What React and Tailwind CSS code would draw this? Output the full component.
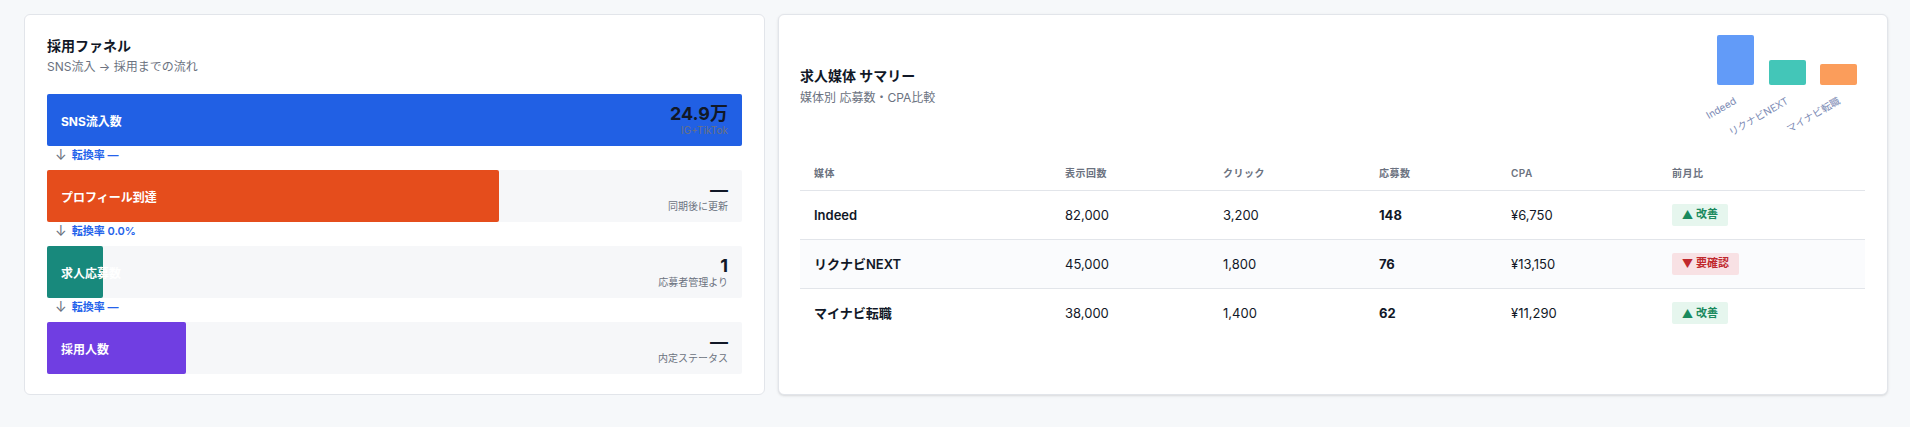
const fontStack = {
  fontFamily: '"Inter", "Noto Sans CJK JP", sans-serif',
};

const funnel = [
  { label: "SNS流入数", value: "24.9万", sub: "IG+TikTok", fill: "w-full bg-[#2160e4]", rate: "転換率 —" },
  { label: "プロフィール到達", value: "—", sub: "同期後に更新", fill: "w-[65%] bg-[#e54d1c]", rate: "転換率 0.0%" },
  { label: "求人応募数", value: "1", sub: "応募者管理より", fill: "w-[8%] bg-[#18897c]", rate: "転換率 —" },
  { label: "採用人数", value: "—", sub: "内定ステータス", fill: "w-[20%] bg-[#703ee2]" },
];

const media = [
  { name: "Indeed", views: "82,000", clicks: "3,200", apps: "148", cpa: "¥6,750", good: true },
  { name: "リクナビNEXT", views: "45,000", clicks: "1,800", apps: "76", cpa: "¥13,150", good: false },
  { name: "マイナビ転職", views: "38,000", clicks: "1,400", apps: "62", cpa: "¥11,290", good: true },
];

const FunnelChart = () => (
  <div className="flex flex-col">
    {funnel.map((step) => (
      <div key={step.label}>
        {/* Bar */}
        <div className="relative flex h-[52px] items-center justify-between rounded-[2px] bg-[#f6f7f9] px-[14px]">
          <div className={`absolute inset-y-0 left-0 rounded-[2px] ${step.fill}`} />
          <span className="relative whitespace-nowrap pt-[4px] text-[12px] leading-none font-bold text-white">
            {step.label}
          </span>
          <div className="relative flex flex-col items-end self-start pt-[8px]">
            <span className="text-[18px] leading-[23px] font-bold text-[#111827]">{step.value}</span>
            <span className="text-[10px] leading-[10px] text-[#6b7280]">{step.sub}</span>
          </div>
        </div>

        {/* Conversion rate */}
        {step.rate && (
          <div className="flex h-6 items-center gap-[5px] pb-[6px] pl-2">
            <span className="text-[14px] leading-none text-[#6b7280]">↓</span>
            <span className="text-[11px] leading-none font-semibold text-[#2563eb]">{step.rate}</span>
          </div>
        )}
      </div>
    ))}
  </div>
);

const MediaChart = () => (
  <svg width="240" height="125" viewBox="0 0 240 125" className="block">
    <rect x="91" y="3" width="37" height="50" rx="2" fill="#3b82f6" fillOpacity="0.8" />
    <rect x="143" y="28" width="37" height="25" rx="2" fill="#14b8a6" fillOpacity="0.8" />
    <rect x="194" y="32" width="37" height="21" rx="2" fill="#f97316" fillOpacity="0.7" />
    <g fontSize="10" fill="#7c8ab4">
      <text x="111" y="71" textAnchor="end" transform="rotate(-30 111 71)">Indeed</text>
      <text x="163" y="71" textAnchor="end" transform="rotate(-30 163 71)">リクナビNEXT</text>
      <text x="215" y="71" textAnchor="end" transform="rotate(-30 215 71)">マイナビ転職</text>
    </g>
  </svg>
);

const Badge = ({ good }) => (
  <span
    className={`inline-flex h-[22px] items-center gap-[3px] rounded-[2px] px-[10px] text-[11px] font-semibold ${
      good ? "bg-[#e6f6ee] text-[#1a8a5e]" : "bg-[#f8e1e4] text-[#c0282d]"
    }`}
  >
    <span className="font-['Noto_Sans_CJK_JP']">{good ? "▲" : "▼"}</span>
    {good ? "改善" : "要確認"}
  </span>
);

export default function App() {
  return (
    <div style={fontStack} className="min-h-[427px] bg-[#f6f8fa] pt-[14px] pr-[22px] pl-6">
      <div className="grid grid-cols-[741px_1110px] gap-[13px]">

        {/* Funnel */}
        <section className="h-[381px] rounded-md border border-[#e2e5ea] bg-white px-[22px] pt-[21px]">
          <h2 className="text-[14px] leading-[20px] font-bold text-[#111827]">採用ファネル</h2>
          <p className="mt-[2px] mb-[18px] text-[12px] leading-[18px] text-[#6b7280]">SNS流入 → 採用までの流れ</p>
          <FunnelChart />
        </section>

        {/* Media summary */}
        <section className="h-[381px] rounded-md border border-[#e2e5ea] bg-white px-[21px] shadow-sm">
          <div className="flex items-start justify-between pt-[17px]">
            <div className="pt-[34px]">
              <h2 className="text-[14px] leading-[20px] font-bold text-[#111827]">求人媒体 サマリー</h2>
              <p className="mt-[3px] text-[12px] leading-[18px] text-[#6b7280]">媒体別 応募数・CPA比較</p>
            </div>
            <MediaChart />
          </div>

          <table className="w-[1065px] table-fixed border-collapse text-[13px] text-[#111827]">
            <thead>
              <tr className="h-[33px] border-b border-[#e2e5ea] text-left text-[10px] tracking-[0.5px] text-[#6b7280]">
                <th className="w-[251px] pl-[14px] font-semibold">媒体</th>
                <th className="w-[158px] pl-[14px] font-semibold">表示回数</th>
                <th className="w-[156px] pl-[14px] font-semibold">クリック</th>
                <th className="w-[132px] pl-[14px] font-semibold">応募数</th>
                <th className="w-[161px] pl-[14px] font-semibold">CPA</th>
                <th className="pl-[14px] font-semibold">前月比</th>
              </tr>
            </thead>
            <tbody>
              {media.map((row, i) => (
                <tr
                  key={row.name}
                  className={`h-[49px] ${i === 1 ? "bg-[#fafbfd]" : ""} ${i < 2 ? "border-b border-[#e2e5ea]" : ""}`}
                >
                  <td className="pt-[2px] pl-[14px] font-semibold">{row.name}</td>
                  <td className="pt-[2px] pl-[14px]">{row.views}</td>
                  <td className="pt-[2px] pl-[14px]">{row.clicks}</td>
                  <td className="pt-[2px] pl-[14px] font-bold">{row.apps}</td>
                  <td className="pt-[2px] pl-[14px]">{row.cpa}</td>
                  <td className="pl-[14px]"><Badge good={row.good} /></td>
                </tr>
              ))}
            </tbody>
          </table>
        </section>

      </div>
    </div>
  );
}
